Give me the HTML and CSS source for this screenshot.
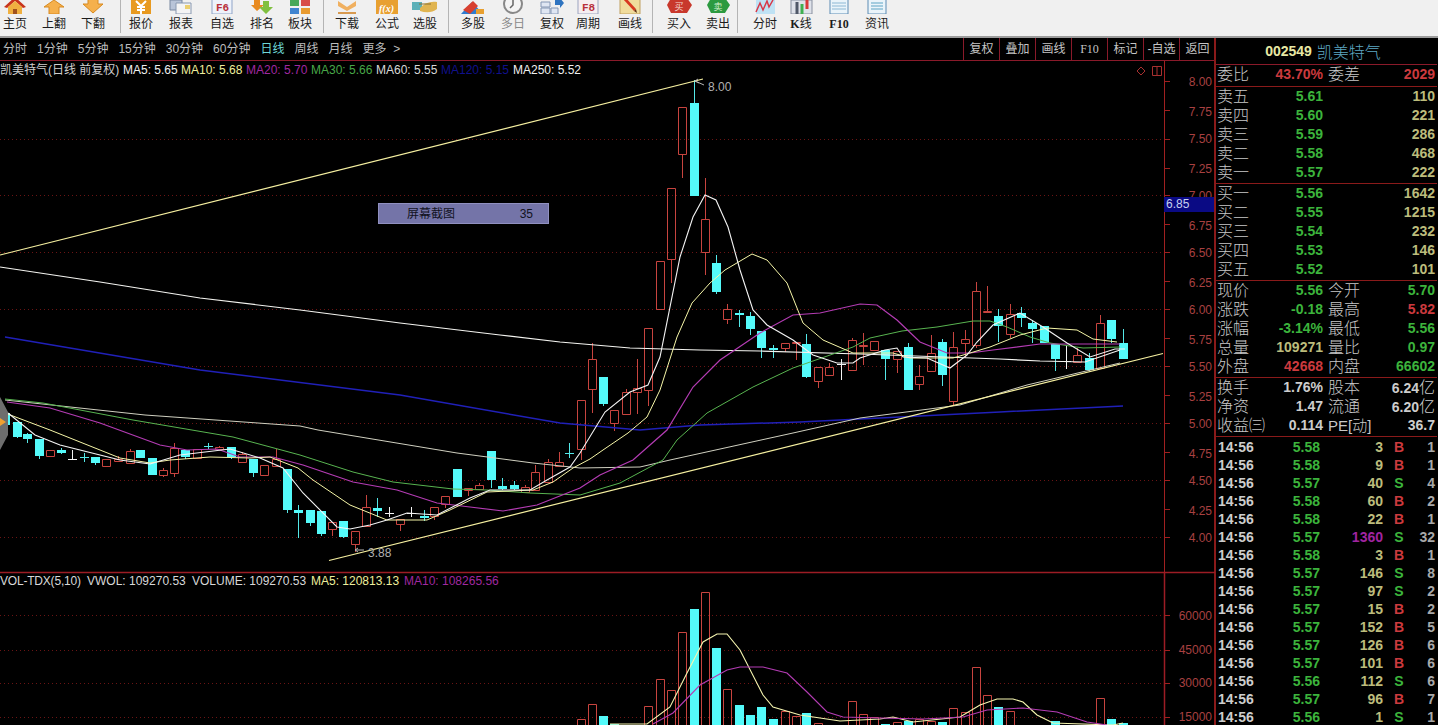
FILE: index.html
```html
<!DOCTYPE html>
<html lang="zh-CN">
<head>
<meta charset="utf-8">
<title>凯美特气</title>
<link rel="stylesheet" href="styles.css">
</head>
<body>
<header class="toolbar">
  <div class="tool"><svg viewBox="0 0 30 14"><path d="M4 7 15 -3 26 7l-3 1-8-7-8 7z" fill="#c8341c"/><path d="M8 7l7-6 7 6v7H8z" fill="#f0b040"/><path d="M13 9h4v5h-4z" fill="#a0521c"/></svg><span>主页</span></div>
  <div class="tool g9"><svg viewBox="0 0 30 14"><path d="M15 0 25 7h-5v7H10V7H5z" fill="#f5b04c" stroke="#d88a20"/></svg><span>上翻</span></div>
  <div class="tool g9"><svg viewBox="0 0 30 14"><path d="M10 -2h10V4h5L15 13 5 4h5z" fill="#f5b04c" stroke="#d88a20"/></svg><span>下翻</span></div>
  <i class="sep g12"></i>
  <div class="tool g5"><svg viewBox="0 0 30 14"><path d="M5 0h20v15H5z" fill="#e89a20"/><path d="M10 1l5 5 5-5M15 6v8M11 7h8M11 10h8" stroke="#fff" stroke-width="2" fill="none"/></svg><span>报价</span></div>
  <div class="tool g10"><svg viewBox="0 0 30 14"><path d="M4 0h12v10H4z" fill="#b8c4d8" stroke="#7888a0"/><path d="M10 3h15v11H10z" fill="#f4f4f4" stroke="#8898b0"/><path d="M19 5h5v4h-5z" fill="#ecd070"/></svg><span>报表</span></div>
  <div class="tool g11"><svg viewBox="0 0 30 14"><path d="M5 -1h20v15H5z" fill="#eef2fa" stroke="#8fa4c8"/><text class="ico-f" x="9" y="11" fill="#b8303c">F6</text></svg><span>自选</span></div>
  <div class="tool g10"><svg viewBox="0 0 30 14"><path d="M7 -2h6v7h4l-7 6-6-6h3z" fill="#e88a20"/><path d="M16 1h6v6h4l-7 7-7-7h4z" fill="#80c040"/></svg><span>排名</span></div>
  <div class="tool g8"><svg viewBox="0 0 30 14"><path d="M5 0h9v6H5z" fill="#46a85a"/><path d="M16 0h9v6h-9z" fill="#d84c48"/><path d="M5 8h9v6H5z" fill="#3f84d0"/><path d="M16 8h9v6h-9z" fill="#e89a30"/></svg><span>板块</span></div>
  <i class="sep g8"></i>
  <div class="tool g8"><svg viewBox="0 0 30 14"><path d="M6 1 15 7l9-6v5l-9 5-9-5z" fill="#f0b060"/><path d="M6 12h18v2H6z" fill="#d89a50"/></svg><span>下载</span></div>
  <div class="tool g10"><svg viewBox="0 0 30 14"><path d="M4 0h22v15H4z" fill="#e8a030"/><text class="ico-fx" x="7" y="12" fill="#fff">f(x)</text></svg><span>公式</span></div>
  <div class="tool g8"><svg viewBox="0 0 30 14"><path d="M2 2h10v8H2z" fill="#5cb0b8"/><path d="M10 8c5-5 10-7 17-6v7c-5 4-11 4-17 2z" fill="#e0b450"/><path d="M9 4h12" stroke="#8a7030"/></svg><span>选股</span></div>
  <i class="sep g8"></i>
  <div class="tool g9"><svg viewBox="0 0 30 14"><path d="M3 14 14 2l11 12z" fill="#2f7cd0"/><path d="M5 10 15 1l5 5-8 8z" fill="#d84030"/><path d="M18 9h8v5h-8z" fill="#e8a030"/></svg><span>多股</span></div>
  <div class="tool g10 muted"><svg viewBox="0 0 30 14"><circle cx="15" cy="4" r="9" fill="#f4f4f4" stroke="#888" stroke-width="2"/><path d="M15 -1v6l-3 3" stroke="#666" fill="none" stroke-width="1.500"/></svg><span>多日</span></div>
  <div class="tool g9"><svg viewBox="0 0 30 14"><path d="M4 2h9v5H4zM4 8h9v6H4zM14 8h7v6h-7z" fill="#dfe6f2" stroke="#8496b4"/><path d="M18 0h5V-2l4 5-4 5V5h-5z" fill="#2f74c0"/></svg><span>复权</span></div>
  <div class="tool g6"><svg viewBox="0 0 30 14"><path d="M5 -1h20v15H5z" fill="#f6eef0" stroke="#9ba4c0"/><text class="ico-f" x="9" y="11" fill="#b8303c">F8</text></svg><span>周期</span></div>
  <div class="tool g12"><svg viewBox="0 0 30 14"><path d="M5 -1h20v15H5z" fill="#f0dc9c" stroke="#c0a060"/><path d="M8 -1l11 12 2-2L10 -3z" fill="#d83820"/><path d="M19 11l3 2-1-4z" fill="#603010"/></svg><span>画线</span></div>
  <i class="sep g7"></i>
  <div class="tool g11"><svg viewBox="0 0 30 14"><path d="M7 -2h16l5 7-5 8H7L3 5z" fill="#c8382c"/><text class="ico-h" x="15" y="10" fill="#f4d8d0">买</text></svg><span>买入</span></div>
  <div class="tool g9"><svg viewBox="0 0 30 14"><path d="M8 -2h14l5 7-5 8H8L4 5z" fill="#2c9a40"/><text class="ico-h" x="15" y="10" fill="#d8f0d0">卖</text></svg><span>卖出</span></div>
  <i class="sep g4"></i>
  <div class="tool g12"><svg viewBox="0 0 30 14"><path d="M6 0h19v14H6z" fill="#bfe2f4"/><path d="M6 12 10 3l3 7 4-9 2 6 4-7" stroke="#d83848" stroke-width="1.500" fill="none"/></svg><span>分时</span></div>
  <div class="tool g6"><svg viewBox="0 0 30 14"><path d="M5 0h21v14H5z" fill="#dfe2ea" stroke="#8890a0"/><path d="M11 2v12" stroke="#505868" stroke-width="3"/><path d="M16 4v11" stroke="#40b050" stroke-width="3"/><path d="M21 -1v10" stroke="#d83838" stroke-width="3"/></svg><span><em class="serif">K</em>线</span></div>
  <div class="tool g8"><svg viewBox="0 0 30 14"><path d="M6 -1h18v15H6z" fill="#eaf4fa" stroke="#5c8cb4"/><path d="M8 3h14M8 6h14M8 9h14" stroke="#8cb8d4"/></svg><span class="serif">F10</span></div>
  <div class="tool g8"><svg viewBox="0 0 30 14"><path d="M6 -1h18v15H6z" fill="#eaf4fa" stroke="#5c8cb4"/><path d="M9 3h12M9 6h12M9 9h12" stroke="#5ca4c4"/></svg><span>资讯</span></div>
</header>

<div class="workspace">
  <section class="chart-pane">
    <nav class="tabs">
      <div class="periods">
        <span>分时</span><span>1分钟</span><span>5分钟</span><span>15分钟</span><span>30分钟</span><span>60分钟</span><span class="on">日线</span><span>周线</span><span>月线</span><span>更多&nbsp;&nbsp;&gt;</span>
      </div>
      <div class="actions">
        <span>复权</span><span>叠加</span><span>画线</span><span class="serif">F10</span><span>标记</span><span>-自选</span><span>返回</span>
      </div>
    </nav>
    <div class="chart-wrap">
      <svg class="chart" viewBox="0 61 1215 664">
        <path class="grid" d="M0 139.500H1164M0 195.500H1164M0 252.500H1164M0 309.500H1164M0 366.500H1164M0 423.500H1164M0 480.500H1164M0 537.500H1164M0 615.500H1164M0 650.500H1164M0 683.500H1164M0 717.500H1164"/>
        <path class="axis" d="M1164.500 61V725M1164 572.500H1215"/>
        <path class="axis-strong" d="M0 572.500H1215M1164.500 573V725"/>
        <path class="axis" d="M1164 81.500h6M1164 110.500h6M1164 139.500h6M1164 168.500h6M1164 195.500h6M1164 224.500h6M1164 252.500h6M1164 281.500h6M1164 309.500h6M1164 338.500h6M1164 366.500h6M1164 395.500h6M1164 423.500h6M1164 452.500h6M1164 480.500h6M1164 509.500h6M1164 537.500h6M1164 615.500h6M1164 650.500h6M1164 683.500h6M1164 717.500h6"/>

        <!-- price candles -->
        <path class="red" d="M46.500 450.500h8v6h-8zM50.500 456v1M102.500 459.500h8v7h-8zM114.500 459.500h8v2h-8zM118.500 456v3M126.500 451.500h8v12h-8zM130.500 449v2M130.500 463v1M159.500 470.500h8v5h-8zM163.500 468v2M163.500 475v2M170.500 448.500h8v25h-8zM174.500 443v5M174.500 473v4M193.500 449.500h8v9h-8zM215.500 447.500h8v2h-8zM219.500 446v1M219.500 449v1M238.500 454.500h8v8h-8zM242.500 452v2M260.500 465.500h8v10h-8zM272.500 459.500h8v7h-8zM276.500 449v10M328.500 522.500h8v7h-8zM332.500 529v7M351.500 531.500h8v13h-8zM355.500 544v8M362.500 507.500h8v19h-8zM366.500 495v12M396.500 519.500h8v5h-8zM400.500 524v7M430.500 507.500h8v9h-8zM434.500 516v4M441.500 496.500h8v8h-8zM445.500 504v4M464.500 488.500h8v2h-8zM468.500 490v6M475.500 485.500h8v4h-8zM479.500 483v2M521.500 487.500h8v5h-8zM525.500 485v2M525.500 492v1M531.500 472.500h8v18h-8zM535.500 465v7M544.500 462.500h8v20h-8zM548.500 459v3M555.500 462.500h8v4h-8zM559.500 452v10M577.500 400.500h8v49h-8zM581.500 449v11M588.500 359.500h8v30h-8zM592.500 343v16M592.500 389v24M610.500 410.500h8v13h-8zM614.500 423v8M622.500 392.500h8v22h-8zM626.500 389v3M633.500 388.500h8v4h-8zM637.500 359v29M637.500 392v22M644.500 328.500h8v62h-8zM648.500 390v16M656.500 261.500h8v48h-8zM667.500 188.500h8v71h-8zM671.500 259v24M678.500 107.500h8v47h-8zM682.500 154v24M701.500 219.500h8v33h-8zM705.500 178v41M705.500 252v23M723.500 309.500h8v10h-8zM727.500 304v5M727.500 319v5M781.500 343.500h8v5h-8zM785.500 348v4M792.500 342.500h8v1h-8zM796.500 343v17M814.500 367.500h8v14h-8zM818.500 381v7M825.500 367.500h8v8h-8zM829.500 363v4M848.500 340.500h8v30h-8zM852.500 338v2M859.500 345.500h8v1h-8zM863.500 333v12M863.500 346v19M870.500 341.500h8v9h-8zM893.500 351.500h8v8h-8zM897.500 359v14M915.500 376.500h8v8h-8zM919.500 365v11M919.500 384v6M927.500 353.500h8v18h-8zM931.500 335v18M949.500 347.500h8v54h-8zM953.500 332v15M953.500 401v4M961.500 339.500h8v4h-8zM965.500 330v9M965.500 343v15M972.500 291.500h8v54h-8zM976.500 282v9M976.500 345v3M983.500 311.500h8v1h-8zM987.500 286v25M987.500 312v1M1006.500 314.500h8v20h-8zM1010.500 304v10M1010.500 334v4M1073.500 355.500h8v7h-8zM1077.500 348v7M1096.500 323.500h8v45h-8zM1100.500 315v8"/>
        <path class="cyan-wick" d="M5.500 408v17M17.500 437v1M27.500 433v10M39.500 456v3M61.500 448v6M95.500 463v2M185.500 457v2M231.500 457v2M253.500 473v4M287.500 510v3M298.500 505v33M310.500 523v3M321.500 534v2M343.500 537v1M377.500 498v19M424.500 510v11M491.500 480v8M502.500 478v12M514.500 481v9M603.500 404v2M694.500 80v23M716.500 255v39M739.500 310v17M750.500 312v23M761.500 348v10M773.500 345v13M806.500 334v44M885.500 359v21M908.500 343v4M942.500 339v47M998.500 309v33M1021.500 307v20M1032.500 320v23M1055.500 359v12M1089.500 353v18M1111.500 339v4M1123.500 329v14M84.500 453v9M80 457.500h9M208.500 443v6M204 446.500h9M569.500 443v15M565 453.500h9"/>
        <path class="cyan" d="M1 413h9v12H1zM13 422h9v15h-9zM23 434h9v5h-9zM35 439h9v17h-9zM57 450h9v3h-9zM91 457h9v6h-9zM136 450h9v8h-9zM148 458h9v17h-9zM181 450h9v7h-9zM227 447h9v10h-9zM249 459h9v14h-9zM283 469h9v41h-9zM294 510h9v3h-9zM306 510h9v13h-9zM317 511h9v23h-9zM339 521h9v16h-9zM373 508h9v3h-9zM420 516h9v2h-9zM453 469h9v28h-9zM487 451h9v29h-9zM498 486h9v3h-9zM510 485h9v4h-9zM599 377h9v27h-9zM690 103h9v93h-9zM712 263h9v29h-9zM735 313h9v2h-9zM746 316h9v13h-9zM757 331h9v17h-9zM769 348h9v2h-9zM802 344h9v33h-9zM881 350h9v9h-9zM904 347h9v43h-9zM938 342h9v33h-9zM994 316h9v10h-9zM1017 313h9v5h-9zM1028 323h9v6h-9zM1040 326h9v17h-9zM1051 344h9v15h-9zM1085 358h9v12h-9zM1107 320h9v19h-9zM1119 343h9v16h-9z"/>
        <path class="white" d="M72.500 450v9M68 459.500h9M389.500 507v10M385 513.500h9M411.500 507v10M407 513.500h9M841.500 359v21M837 364.500h9M1066.500 346v23M1062 361.500h9"/>

        <!-- moving averages -->
        <polyline class="ma120" points="5,337 200,370 400,395 560,423 640,430 700,425 800,422 860,419 1000,412 1123,406"/>
        <polyline class="ma250" points="0,267 100,282 200,298 300,310 400,323 500,335 560,342 630,348 700,350 760,351 860,354 1000,359 1040,361 1085,362 1120,350"/>
        <polyline class="ma60" points="5,400 145,415 300,426 318,430 457,453 533,463 580,468 640,467 670,460 793,433 860,418 960,405 1027,385 1120,363"/>
        <polyline class="ma30" points="5,399 43,403 133,420 233,437 300,455 353,472 393,482 453,489 487,490 530,493 580,495 620,483 663,460 677,440 707,413 753,387 793,368 853,347 870,338 902,331 937,327 973,321 990,321 1007,327 1030,337 1050,343 1083,348 1120,347"/>
        <polyline class="ma20" points="7,402 50,408 100,423 160,445 187,450 217,449 240,457 273,457 303,465 353,482 397,490 437,503 470,507 503,511 537,505 580,488 600,475 633,460 667,430 693,387 720,360 760,333 793,315 820,313 860,304 877,305 897,320 920,342 947,353 970,353 993,350 1040,344 1073,344 1120,344"/>
        <polyline class="ma10" points="5,413 50,430 100,450 120,458 150,463 170,460 210,457 250,458 270,457 298,468 313,480 350,505 387,520 427,520 450,510 487,492 533,490 553,482 573,468 590,459 603,450 628,433 647,417 660,390 677,337 692,303 710,283 725,270 752,254 767,260 787,283 803,323 823,340 853,353 893,353 910,358 953,358 970,353 990,347 1020,335 1047,328 1077,330 1093,339 1117,342"/>
        <polyline class="ma5" points="8,413 35,435 60,445 120,460 150,464 180,455 230,449 260,458 283,468 303,493 337,527 350,529 370,525 387,520 407,513 437,515 470,498 490,490 530,490 547,480 570,467 580,453 605,412 630,392 648,385 660,357 680,257 693,217 705,195 716,200 728,227 740,270 753,310 767,325 793,340 813,355 837,363 853,363 860,358 885,350 897,348 903,357 927,358 950,368 967,355 977,342 993,325 1020,313 1043,327 1067,343 1090,357 1115,349 1125,349"/>
        <path class="trend" d="M0 255 703 79M329 560.500 1163 353.500"/>
        <path class="marker" d="M699 83l-4-2 3-2M695 81l9 4M358 552l-3-2 3-2M355 550l9 0"/>
        <path class="edge" d="M0 397 8 412V435L0 450z"/>
        <path class="edge-arrow" d="M0 418 6 422 0 426z"/>
        <text class="note" x="708" y="91">8.00</text>
        <text class="note" x="368" y="557">3.88</text>

        <!-- volume -->
        <path class="red" d="M577.500 719.500h8v8h-8zM588.500 704.500h8v24h-8zM644.500 706.500h8v22h-8zM656.500 679.500h8v48h-8zM667.500 690.500h8v38h-8zM678.500 632.500h8v96h-8zM701.500 592.500h8v136h-8zM723.500 689.500h8v38h-8zM781.500 711.500h8v16h-8zM792.500 716.500h8v12h-8zM814.500 723.500h8v4h-8zM848.500 701.500h8v26h-8zM859.500 714.500h8v14h-8zM870.500 717.500h8v10h-8zM893.500 722.500h8v6h-8zM915.500 719.500h8v9h-8zM927.500 721.500h8v6h-8zM949.500 708.500h8v20h-8zM961.500 712.500h8v16h-8zM972.500 667.500h8v60h-8zM983.500 695.500h8v33h-8zM1006.500 711.500h8v17h-8zM1096.500 698.500h8v30h-8z"/>
        <path class="cyan" d="M599 716h9v9h-9zM610 724h9v1h-9zM690 609h9v116h-9zM712 648h9v77h-9zM735 705h9v20h-9zM746 715h9v10h-9zM757 707h9v18h-9zM769 719h9v6h-9zM802 713h9v12h-9zM881 724h9v1h-9zM904 721h9v4h-9zM938 722h9v3h-9zM994 707h9v18h-9zM1051 721h9v4h-9zM1107 719h9v6h-9zM1119 723h9v2h-9z"/>
        <polyline class="vol5" points="610,724 647,724 670,707 687,673 703,642 717,634 727,634 740,650 763,695 773,707 800,715 840,721 880,719 893,717 913,722 960,717 980,705 997,699 1013,699 1023,702 1037,715 1053,723 1113,725 1123,723"/>
        <polyline class="vol10" points="653,724 673,713 700,685 727,670 740,667 763,667 787,673 807,692 827,712 843,717 880,718 923,719 963,717 987,710 1023,708 1057,712 1087,722 1107,725"/>

        <!-- legends -->
        <text class="lg c-name" x="0" y="74">凯美特气(日线 前复权)</text>
        <text class="lg c-w" x="123" y="74">MA5: 5.65</text>
        <text class="lg c-y" x="181" y="74">MA10: 5.68</text>
        <text class="lg c-m" x="246" y="74">MA20: 5.70</text>
        <text class="lg c-g" x="311" y="74">MA30: 5.66</text>
        <text class="lg c-l" x="376" y="74">MA60: 5.55</text>
        <text class="lg c-b" x="441" y="74">MA120: 5.15</text>
        <text class="lg c-w" x="513" y="74">MA250: 5.52</text>
        <text class="lg c-l tight" x="0" y="585">VOL-TDX(5,10)</text>
        <text class="lg c-l" x="87" y="585">VWOL: 109270.53</text>
        <text class="lg c-l" x="192" y="585">VOLUME: 109270.53</text>
        <text class="lg c-y" x="311" y="585">MA5: 120813.13</text>
        <text class="lg c-m" x="404" y="585">MA10: 108265.56</text>
        <path class="flags" d="M1141 67l4 4-4 4-4-4zM1152.500 66.500h9v9h-9zM1157 66.500v9"/>

        <!-- axes -->
        <g class="ax">
          <text x="1212" y="86">8.00</text><text x="1212" y="116">7.75</text><text x="1212" y="143">7.50</text><text x="1212" y="173">7.25</text><text x="1212" y="200">7.00</text><text x="1212" y="230">6.75</text><text x="1212" y="257">6.50</text><text x="1212" y="287">6.25</text><text x="1212" y="314">6.00</text><text x="1212" y="344">5.75</text><text x="1212" y="371">5.50</text><text x="1212" y="401">5.25</text><text x="1212" y="428">5.00</text><text x="1212" y="458">4.75</text><text x="1212" y="485">4.50</text><text x="1212" y="515">4.25</text><text x="1212" y="542">4.00</text>
          <text x="1212" y="620">60000</text><text x="1212" y="654">45000</text><text x="1212" y="687">30000</text><text x="1212" y="721">15000</text>
        </g>
      </svg>
      <div class="axis-tag">6.85</div>
      <div class="popup"><span>屏幕截图</span><span>35</span></div>
    </div>
  </section>

  <aside class="side">
    <div class="title"><b>002549</b><span>凯美特气</span></div>
    <div class="block first">
      <div class="q"><span>委比</span><b class="red-t">43.70%</b><span>委差</span><b class="red-t">2029</b></div>
    </div>
    <div class="block">
      <div class="q"><span>卖五</span><b class="grn">5.61</b><i></i><b class="yel">110</b></div>
      <div class="q"><span>卖四</span><b class="grn">5.60</b><i></i><b class="yel">221</b></div>
      <div class="q"><span>卖三</span><b class="grn">5.59</b><i></i><b class="yel">286</b></div>
      <div class="q"><span>卖二</span><b class="grn">5.58</b><i></i><b class="yel">468</b></div>
      <div class="q"><span>卖一</span><b class="grn">5.57</b><i></i><b class="yel">222</b></div>
    </div>
    <div class="block">
      <div class="q"><span>买一</span><b class="grn">5.56</b><i></i><b class="yel">1642</b></div>
      <div class="q"><span>买二</span><b class="grn">5.55</b><i></i><b class="yel">1215</b></div>
      <div class="q"><span>买三</span><b class="grn">5.54</b><i></i><b class="yel">232</b></div>
      <div class="q"><span>买四</span><b class="grn">5.53</b><i></i><b class="yel">146</b></div>
      <div class="q"><span>买五</span><b class="grn">5.52</b><i></i><b class="yel">101</b></div>
    </div>
    <div class="block">
      <div class="q"><span>现价</span><b class="grn">5.56</b><span>今开</span><b class="grn">5.70</b></div>
      <div class="q"><span>涨跌</span><b class="grn">-0.18</b><span>最高</span><b class="red-t">5.82</b></div>
      <div class="q"><span>涨幅</span><b class="grn">-3.14%</b><span>最低</span><b class="grn">5.56</b></div>
      <div class="q"><span>总量</span><b class="yel">109271</b><span>量比</span><b class="grn">0.97</b></div>
      <div class="q"><span>外盘</span><b class="red-t">42668</b><span>内盘</span><b class="grn">66602</b></div>
    </div>
    <div class="block">
      <div class="q"><span>换手</span><b class="wht">1.76%</b><span>股本</span><b class="wht">6.24<em>亿</em></b></div>
      <div class="q"><span>净资</span><b class="wht">1.47</b><span>流通</span><b class="wht">6.20<em>亿</em></b></div>
      <div class="q"><span>收益㈢</span><b class="wht">0.114</b><span class="nar">PE[动]</span><b class="wht">36.7</b></div>
    </div>
    <div class="ticks">
      <div class="t"><b class="wht">14:56</b><b class="grn">5.58</b><b class="yel">3</b><b class="red-t">B</b><b class="cnt">1</b></div>
      <div class="t"><b class="wht">14:56</b><b class="grn">5.58</b><b class="yel">9</b><b class="red-t">B</b><b class="cnt">1</b></div>
      <div class="t"><b class="wht">14:56</b><b class="grn">5.57</b><b class="yel">40</b><b class="grn">S</b><b class="cnt">4</b></div>
      <div class="t"><b class="wht">14:56</b><b class="grn">5.58</b><b class="yel">60</b><b class="red-t">B</b><b class="cnt">2</b></div>
      <div class="t"><b class="wht">14:56</b><b class="grn">5.58</b><b class="yel">22</b><b class="red-t">B</b><b class="cnt">1</b></div>
      <div class="t"><b class="wht">14:56</b><b class="grn">5.57</b><b class="pur">1360</b><b class="grn">S</b><b class="cnt">32</b></div>
      <div class="t"><b class="wht">14:56</b><b class="grn">5.58</b><b class="yel">3</b><b class="red-t">B</b><b class="cnt">1</b></div>
      <div class="t"><b class="wht">14:56</b><b class="grn">5.57</b><b class="yel">146</b><b class="grn">S</b><b class="cnt">8</b></div>
      <div class="t"><b class="wht">14:56</b><b class="grn">5.57</b><b class="yel">97</b><b class="grn">S</b><b class="cnt">2</b></div>
      <div class="t"><b class="wht">14:56</b><b class="grn">5.57</b><b class="yel">15</b><b class="red-t">B</b><b class="cnt">2</b></div>
      <div class="t"><b class="wht">14:56</b><b class="grn">5.57</b><b class="yel">152</b><b class="red-t">B</b><b class="cnt">5</b></div>
      <div class="t"><b class="wht">14:56</b><b class="grn">5.57</b><b class="yel">126</b><b class="red-t">B</b><b class="cnt">6</b></div>
      <div class="t"><b class="wht">14:56</b><b class="grn">5.57</b><b class="yel">101</b><b class="red-t">B</b><b class="cnt">6</b></div>
      <div class="t"><b class="wht">14:56</b><b class="grn">5.56</b><b class="yel">112</b><b class="grn">S</b><b class="cnt">6</b></div>
      <div class="t"><b class="wht">14:56</b><b class="grn">5.57</b><b class="yel">96</b><b class="red-t">B</b><b class="cnt">7</b></div>
      <div class="t"><b class="wht">14:56</b><b class="grn">5.56</b><b class="yel">1</b><b class="grn">S</b><b class="cnt">1</b></div>
    </div>
  </aside>
</div>
</body>
</html>
```

FILE: styles.css
```css
* { box-sizing: border-box; }
html, body { margin: 0; height: 725px; overflow: hidden; background: #000; }
body { font-family: "Liberation Sans", "Noto Sans CJK SC", sans-serif; font-size: 12px; }
.serif { font-family: "Liberation Serif", serif; font-weight: 700; font-style: normal; }

/* toolbar */
.toolbar { display: flex; height: 38px; background: #f0f0f0; border-bottom: 2px solid #9c9c9c; overflow: hidden; }
.tool { width: 30px; flex: none; display: flex; flex-direction: column; align-items: center; color: #1c1c1c; }
.tool svg { width: 30px; height: 14px; display: block; overflow: hidden; flex: none; margin-bottom: 1px; }
.tool span { line-height: 18px; white-space: nowrap; }
.tool.muted span { color: #8a8a8a; }
.sep { flex: none; width: 1px; height: 33px; background: #b4b4b4; }
.g4 { margin-left: 4px; } .g5 { margin-left: 5px; } .g6 { margin-left: 6px; } .g7 { margin-left: 7px; }
.g8 { margin-left: 8px; } .g9 { margin-left: 9px; } .g10 { margin-left: 10px; } .g11 { margin-left: 11px; } .g12 { margin-left: 12px; }
.ico-f { font: 700 11px "Liberation Mono", monospace; }
.ico-fx { font: italic 700 10px "Liberation Serif", serif; }
.ico-h { font: 9px "Noto Sans CJK SC", sans-serif; text-anchor: middle; }

/* workspace */
.workspace { display: flex; height: 687px; }
.chart-pane { width: 1215px; flex: none; display: flex; flex-direction: column; }
.tabs { height: 23px; flex: none; display: flex; justify-content: space-between; border-bottom: 1px solid #8a1a2a; color: #bdbdbd; }
.periods { display: flex; gap: 10px; padding-left: 3px; line-height: 23px; }
.periods .on { color: #6fd8d8; }
.actions { display: flex; }
.actions span { width: 36px; height: 22px; line-height: 23px; text-align: center; border-left: 1px solid #8a1a2a; color: #c4c4c4; white-space: nowrap; }
.actions span.serif { font-weight: 400; }
.chart-wrap { position: relative; flex: 1; }
.chart { display: block; width: 1215px; height: 664px; }

/* chart strokes */
.chart path, .chart polyline { fill: none; }
.grid { stroke: #6a1414; stroke-dasharray: 1 3; }
.axis { stroke: #a02020; }
.axis-strong { stroke: #9c1c24; stroke-width: 1.500; }
.chart .red { stroke: #c8443f; }
.chart .cyan { fill: #54fafa; }
.cyan-wick { stroke: #54e8e8; }
.white { stroke: #f4f4f4; }
.ma5 { stroke: #f4f4f4; stroke-width: 1.100; }
.ma10 { stroke: #f6f6a8; }
.ma20 { stroke: #b43cb4; stroke-width: 1.200; }
.ma30 { stroke: #58b450; }
.ma60 { stroke: #d0d0c0; }
.ma120 { stroke: #2020b8; stroke-width: 1.500; }
.ma250 { stroke: #f4f4f0; stroke-width: 1.200; }
.trend { stroke: #f6f0a0; stroke-width: 1.200; }
.marker { stroke: #b8b8b8; }
.chart .edge { fill: #6e6e6e; }
.chart .edge-arrow { fill: #f0a030; }
.vol5 { stroke: #f6f6b0; stroke-width: 1.100; }
.vol10 { stroke: #b43cb4; stroke-width: 1.100; }
.flags { stroke: #a83030; }
.note { font-size: 12px; fill: #b0b0b0; }
.lg { font-size: 12px; }
.tight { letter-spacing: -0.200px; }
.c-name { fill: #cfcfcf; } .c-w { fill: #f0f0f0; } .c-y { fill: #eeee9c; } .c-m { fill: #a028a0; }
.c-g { fill: #48a848; } .c-l { fill: #d8d8d8; } .c-b { fill: #10108c; }
.ax text { font-size: 12px; fill: #a84040; text-anchor: end; }
.axis-tag { position: absolute; left: 1164px; top: 136px; width: 50px; height: 15px; line-height: 15px; padding-left: 2px; background: #0a0a84; color: #c8d0f0; }
.popup { position: absolute; left: 378px; top: 142px; width: 171px; height: 21px; display: flex; justify-content: space-between; padding: 0 15px 0 28px; line-height: 21px; background: #7474a8; border: 1px solid #9090c0; color: #12121e; }

/* side panel */
.side { width: 223px; flex: none; border-left: 2px solid #8a1a1a; margin-left: -1px; color: #cacaca; font-size: 14px; }
.title { height: 27px; display: flex; justify-content: center; align-items: center; gap: 5px; padding-right: 7px; border-bottom: 1px solid #8a1a2a; }
.title b { color: #e8e8a4; }
.title span { font-size: 16px; color: #5ea8c4; font-weight: 300; }
.block { border-bottom: 1px solid #8a1a1a; padding-bottom: 1px; }
.block.first { padding-bottom: 2px; }
.q { display: grid; grid-template-columns: 36px 70px 37px 1fr; height: 19px; line-height: 19px; padding-left: 2px; padding-right: 2px; margin-left: -1px; }
.q > span { font-size: 16px; font-weight: 300; white-space: nowrap; color: #c8c8c8; }
.q > span:nth-child(3) { margin-left: 5px; }
.q > span.nar { font-size: 15px; }
.q > b { text-align: right; white-space: nowrap; }
.q em { font-style: normal; font-weight: 300; font-size: 16px; }
.q i { display: block; }
.ticks { margin-top: 1px; }
.t { display: grid; grid-template-columns: 35px 67px 63px 32px 20px; height: 18px; line-height: 18px; padding-left: 2px; }
.t b:nth-child(2), .t b:nth-child(3), .t b:nth-child(5) { text-align: right; }
.t b:nth-child(4) { text-align: center; }
.grn { color: #3cb43c; } .yel { color: #bcbc7c; } .red-t { color: #cc3a3e; } .wht { color: #cdcdcd; } .pur { color: #a024a0; } .cnt { color: #a8a8a8; }
```
